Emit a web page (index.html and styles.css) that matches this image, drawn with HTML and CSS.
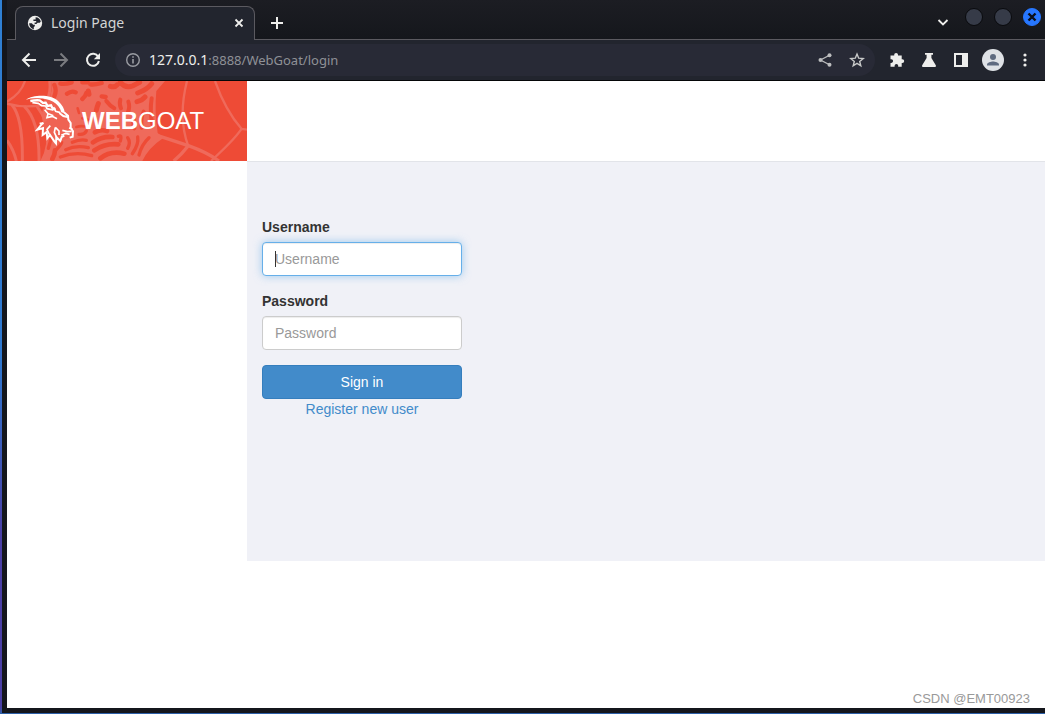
FILE: index.html
```html
<!DOCTYPE html>
<html lang="en">
<head>
<meta charset="utf-8">
<title>Login Page</title>
<link rel="stylesheet" href="styles.css">
</head>
<body>
<div class="window">
  <header class="tabstrip">
    <div class="tab">
      <svg class="icon16" viewBox="0 0 16 16"><circle cx="8" cy="8" r="7.2" fill="#eeeeec"/><path d="M2.2 8.2h2.6l1.4 1.6h1.6v1.4l-1 .8v2.2C4.400 13.800 2.200 11.500 2.200 8.200zM8.600 2.200c2.600 0 4.600 1.800 5.200 4.400l-1 1.200h-2.200L9.400 9H7.600V7.400h1.600V6H6.400V4.400h2.200z" fill="#22252e"/></svg>
      <span class="tab-title">Login Page</span>
      <button class="plain" aria-label="Close tab"><svg class="icon16" viewBox="0 0 16 16"><path d="M4.500 4.500l7 7M11.500 4.500l-7 7" stroke="#eeeeec" stroke-width="1.800"/></svg></button>
    </div>
    <button class="plain new-tab" aria-label="New tab"><svg class="icon16" viewBox="0 0 16 16"><path d="M8 2v12M2 8h12" stroke="#eeeeec" stroke-width="2"/></svg></button>
    <div class="window-controls">
      <button class="plain chevron" aria-label="Search tabs"><svg class="icon16" viewBox="0 0 16 16"><path d="M3.500 6L8 10.500 12.500 6" fill="none" stroke="#eeeeec" stroke-width="1.800"/></svg></button>
      <button class="knob" aria-label="Minimize"></button>
      <button class="knob" aria-label="Maximize"></button>
      <button class="knob knob-close" aria-label="Close"><svg class="icon16" viewBox="0 0 16 16"><path d="M4.500 4.500l7 7M11.500 4.500l-7 7" stroke="#0c1018" stroke-width="2.400"/></svg></button>
    </div>
  </header>
  <nav class="toolbar">
    <button class="plain" aria-label="Back"><svg class="icon16" viewBox="0 0 16 16"><path d="M15 8H2.500M8.500 1.500L2 8l6.500 6.500" fill="none" stroke="#eeeeec" stroke-width="2"/></svg></button>
    <button class="plain" aria-label="Forward"><svg class="icon16" viewBox="0 0 16 16"><path d="M1 8h12.500M7.500 1.500L14 8l-6.500 6.500" fill="none" stroke="#7b7c80" stroke-width="2"/></svg></button>
    <button class="plain" aria-label="Reload"><svg class="icon16" viewBox="0 0 16 16"><path d="M13.200 4.800A6 6 0 1 0 13.900 9" fill="none" stroke="#eeeeec" stroke-width="2"/><path d="M15 1v6.200H8.800z" fill="#eeeeec"/></svg></button>
    <div class="omnibox">
      <svg class="icon16" viewBox="0 0 16 16"><circle cx="8" cy="8" r="6.300" fill="none" stroke="#9a9ca2" stroke-width="1.400"/><path d="M8 7v4.500M8 4.200v1.600" stroke="#9a9ca2" stroke-width="1.600"/></svg>
      <div class="url" role="textbox" aria-label="Address"><span class="host">127.0.0.1</span>:8888/WebGoat/login</div>
      <button class="plain" aria-label="Share"><svg class="icon16" viewBox="0 0 16 16"><path d="M12.500 3.200L3.500 8l9 4.800" fill="none" stroke="#bdbebf" stroke-width="1.300"/><g fill="#bdbebf"><circle cx="12.500" cy="3.200" r="2"/><circle cx="3.500" cy="8" r="2"/><circle cx="12.500" cy="12.800" r="2"/></g></svg></button>
      <button class="plain" aria-label="Bookmark"><svg class="icon16" viewBox="0 0 16 16"><path d="M8 2l1.700 4.200 4.500.3-3.500 2.900 1.100 4.400L8 11.400l-3.800 2.400 1.100-4.400L1.800 6.500l4.500-.3z" fill="none" stroke="#c8c9c9" stroke-width="1.400"/></svg></button>
    </div>
    <button class="plain" aria-label="Extensions"><svg class="icon16" viewBox="0 0 16 16"><path d="M1.500 3.500H5.200V2.800a1.900 1.900 0 0 1 3.800 0v.7h3.700v3.700h.6a1.900 1.900 0 0 1 0 3.800h-.6v3.700H9.200v-.9a1.800 1.800 0 0 0-3.600 0v.9H1.500v-3.800h.8a1.800 1.800 0 0 0 0-3.600h-.8z" fill="#eeeeec"/></svg></button>
    <button class="plain" aria-label="Labs"><svg class="icon16" viewBox="0 0 16 16"><path d="M4 1h8v1.800h-1.600V6l4.400 7.200c.5 1-.1 1.800-1.100 1.800H2.300c-1 0-1.600-.8-1.100-1.800L5.600 6V2.800H4z" fill="#eeeeec"/></svg></button>
    <button class="plain" aria-label="Side panel"><svg class="icon16" viewBox="0 0 16 16"><path d="M1 1h14v14H1zM3 3v10h6V3z" fill="#eeeeec" fill-rule="evenodd"/></svg></button>
    <button class="plain avatar" aria-label="Profile"><svg class="icon22" viewBox="0 0 22 22"><circle cx="11" cy="11" r="11" fill="#dfe2e6"/><circle cx="11" cy="8" r="3" fill="#5f6b80"/><path d="M5 16.600v-1.200c0-2 4-3 6-3s6 1 6 3v1.200z" fill="#5f6b80"/></svg></button>
    <button class="plain" aria-label="Menu"><svg class="icon16" viewBox="0 0 16 16"><g fill="#eeeeec"><circle cx="8" cy="3" r="1.600"/><circle cx="8" cy="8" r="1.600"/><circle cx="8" cy="13" r="1.600"/></g></svg></button>
  </nav>
  <main class="page">
    <div class="page-header">
      <a class="brand" href="#">
        <svg class="brand-art" viewBox="0 0 720 240" aria-hidden="true">
          <rect width="720" height="240" fill="#ee4b36"/>
          <g fill="none" stroke="#ef6a5b" stroke-width="9">
            <path d="M54 0Q42 38 0 62M0 68Q50 82 110 72" stroke-width="7"/>
            <path d="M15 72Q48 110 46 240M52 76Q98 120 96 240M90 76Q140 140 118 240M128 0Q134 40 112 72M0 178Q20 205 28 240"/>
            <path d="M540 0Q512 110 544 196M624 0Q655 88 704 144L720 146M702 146Q680 178 612 240" stroke-width="7"/>
            <path d="M416 152L544 194Q600 214 636 240M544 194Q522 222 500 240" stroke-width="10"/>
          </g>
          <path d="M132 0H474L448 30Q442 90 452 156L470 170Q424 200 406 240H100Q128 190 112 136Q94 90 122 62Q140 30 132 0Z" fill="#ef6a5b"/>
          <g fill="none" stroke="#ee4b36" stroke-linecap="round" stroke-width="13">
            <path d="M142 12Q150 28 142 46M160 8Q176 10 194 4M180 38Q194 28 206 34M226 4L242 4M226 54Q236 46 238 36M250 10Q262 12 284 6M284 46L296 48"/>
            <path d="M310 16Q324 20 330 12M340 4Q356 24 378 14L398 4M392 36Q420 26 434 8M390 62Q406 58 414 48M274 68Q270 78 268 88M244 30L246 40" stroke-width="15"/>
            <path d="M298 60Q308 74 322 82M340 56Q336 70 342 82M364 62Q370 78 362 96M434 52Q428 90 436 130M410 92Q400 110 404 140M382 108Q376 124 382 142" stroke-width="12"/>
            <path d="M334 166Q346 160 340 180M362 170Q372 184 362 202M392 168Q396 190 376 218M426 170Q404 190 396 222M216 160Q232 162 238 150M196 184Q220 174 238 178M176 206Q206 192 244 200M160 228Q206 210 254 224M148 206Q162 192 164 184M134 156Q132 180 124 202" stroke-width="10"/>
            <path d="M264 154Q280 144 300 150M258 184Q284 166 316 168M262 208Q294 186 334 190M280 232Q310 208 352 218M136 234Q144 220 144 208" stroke-width="14"/>
            <path d="M212 82L216 96M226 112L248 118M208 138Q220 134 232 136" stroke-width="8"/>
          </g>
          <path d="M110 50Q155 50 170 94L182 106 188 126 200 150 196 168 150 184 126 162 108 164 104 132 120 118Z" fill="#ef6353"/>
          <path d="M57 56C78 42 130 38 154 61Q174 80 173 97L163 94C156 66 126 51 91 52Q72 51 57 56Z" fill="#fff"/>
          <g fill="none" stroke="#fff" stroke-width="5" stroke-linejoin="miter">
            <path d="M70 60Q84 57 98 58L108 66 116 65 122 75 132 73 138 85 146 84" stroke-width="7"/>
            <path d="M76 65L94 67 104 74 116 75 120 83 138 87"/>
            <path d="M113 86L123 98 120 110 136 106 150 113M124 98L139 104M140 78L146 91 160 95"/>
            <path d="M157 96L169 105 185 109M171 94L183 104 184 116 191 126 191 140 198 151 197 167 188 170" stroke-width="6"/>
            <path d="M166 148L181 152 194 151M163 163L176 157 188 160M186 141L196 144"/>
            <path d="M108 125L91 146 108 141 107 162 119 153 121 172 129 162 142 181 147 187 148 168 160 180 164 168 172 164" stroke-width="6"/>
            <path d="M98 127L110 127M130 134L120 145 128 162M145 139L142 154 149 170M145 139L156 150 156 162"/>
          </g>
        </svg>
        <span class="brand-name"><b>WEB</b>GOAT</span>
      </a>
    </div>
    <div class="content">
      <form class="login">
        <div class="field">
          <label for="username">Username</label>
          <div class="control"><input class="input is-active" id="username" type="text" placeholder="Username"><span class="caret"></span></div>
        </div>
        <div class="field">
          <label for="password">Password</label>
          <input class="input" id="password" type="password" placeholder="Password">
        </div>
        <button class="submit" type="button">Sign in</button>
        <a class="register" href="#">Register new user</a>
      </form>
    </div>
    <span class="watermark">CSDN @EMT00923</span>
  </main>
</div>
</body>
</html>
```
FILE: styles.css
```css
* { box-sizing: border-box; }
body {
  margin: 0;
  min-height: 100vh;
  display: flex;
  padding: 0 0 1px 2px;
  background: linear-gradient(#2f80d4 0%, #2f78cf 50%, #4a3fa5 75%, #4a3fa5 99%, #2b62a8 100%);
  font-family: "Liberation Sans", Arial, sans-serif;
  font-size: 14px;
  line-height: 20px;
  color: #333;
}
svg { display: block; }
.icon16 { width: 16px; height: 16px; flex: none; }
.icon22 { width: 22px; height: 22px; }
.plain { border: 0; padding: 0; background: none; flex: none; }
.window {
  flex: 1;
  min-width: 0;
  display: flex;
  flex-direction: column;
  padding: 0 0 5px 5px;
  background: #14161c;
}
.tabstrip {
  height: 40px;
  display: flex;
  align-items: flex-end;
  padding-left: 8px;
  background: linear-gradient(#1c1d23, #15171c);
  border-bottom: 1px solid #5b5a60;
}
.tab {
  width: 240px;
  height: 34px;
  margin-bottom: -1px;
  padding: 0 7px 2px 11px;
  display: flex;
  align-items: center;
  gap: 8px;
  background: #22252e;
  border: 1px solid #5b5a60;
  border-bottom: 0;
  border-radius: 8px 8px 0 0;
}
.tab-title {
  flex: 1;
  font: 14px/20px "Noto Sans", sans-serif;
  color: #d3d4d4;
}
.new-tab { margin: 0 0 8px 14px; }
.window-controls {
  align-self: flex-start;
  margin-left: auto;
  padding: 8px 4px 0 0;
  display: flex;
  gap: 11px;
}
.chevron { margin-top: 6px; margin-right: 3px; }
.knob {
  width: 18px;
  height: 18px;
  padding: 0;
  border: 1px solid #090a0d;
  border-radius: 50%;
  background: #363b48;
}
.knob-close { border-color: #2777ff; background: #2777ff; }
.toolbar {
  height: 41px;
  display: flex;
  align-items: center;
  gap: 16px;
  padding: 0 12px 0 14px;
  background: #22252e;
  border-bottom: 1px solid #050608;
}
.omnibox {
  flex: 1;
  height: 32px;
  margin: 0 -2px 0 -2px;
  padding: 0 10px;
  display: flex;
  align-items: center;
  gap: 16px;
  border-radius: 16px;
  background: #282a36;
}
.url {
  flex: 1;
  margin-left: -8px;
  font: 13px/20px "Noto Sans", sans-serif;
  color: #8f9196;
}
.host { font-size: 14px; color: #eeeeec; }
.avatar { margin: 0 -3px; }
.page {
  flex: 1;
  position: relative;
  background: #fff;
}
.page-header { height: 80px; }
.brand {
  position: relative;
  display: block;
  width: 240px;
  height: 80px;
  color: #fff;
  text-decoration: none;
}
.brand-art { width: 100%; height: 100%; }
.brand-name {
  position: absolute;
  left: 75px;
  top: 24px;
  font-size: 24px;
  line-height: 32px;
}
.content {
  min-height: 400px;
  margin-left: 240px;
  padding: 55px 15px 0;
  background: #f0f1f7;
  border-top: 1px solid #e2e4e9;
}
.login {
  width: 200px;
  display: flex;
  flex-direction: column;
}
.field { margin-bottom: 15px; }
.field label {
  display: block;
  margin-bottom: 5px;
  font-weight: bold;
}
.control { position: relative; }
.input {
  display: block;
  width: 100%;
  height: 34px;
  padding: 6px 12px;
  border: 1px solid #ccc;
  border-radius: 4px;
  background: #fff;
  box-shadow: inset 0 1px 1px rgba(0, 0, 0, .075);
  font: inherit;
  color: #555;
  outline: 0;
}
.input::placeholder { color: #999; opacity: 1; }
.input.is-active {
  border-color: #66afe9;
  box-shadow: inset 0 1px 1px rgba(0, 0, 0, .075), 0 0 8px rgba(102, 175, 233, .6);
}
.caret {
  position: absolute;
  left: 13px;
  top: 9px;
  width: 1px;
  height: 16px;
  background: #333;
}
.submit {
  height: 34px;
  border: 1px solid #357ebd;
  border-radius: 4px;
  background: #428bca;
  font: inherit;
  color: #fff;
}
.register {
  text-align: center;
  color: #428bca;
  text-decoration: none;
}
.watermark {
  position: absolute;
  right: 15px;
  bottom: 0;
  font-size: 13px;
  line-height: 18px;
  color: #999;
}
```
